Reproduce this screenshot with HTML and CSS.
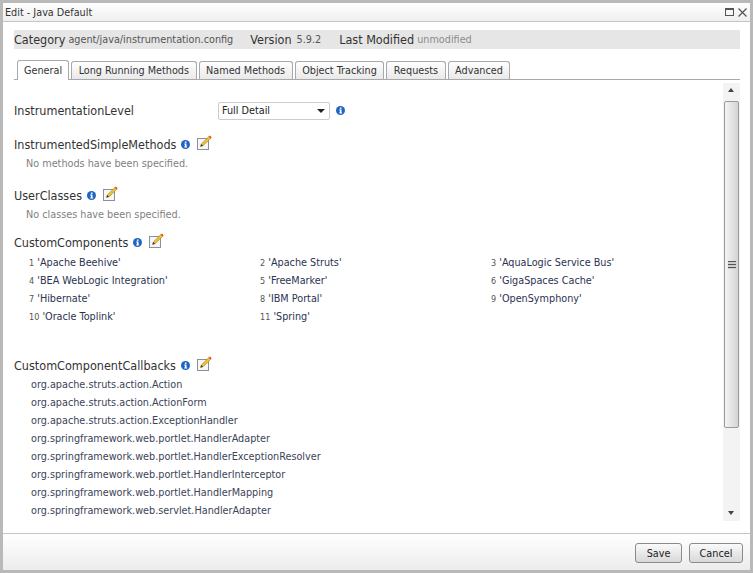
FILE: index.html
```html
<!DOCTYPE html>
<html lang="en">
<head>
<meta charset="utf-8">
<title>Edit - Java Default</title>
<link rel="stylesheet" href="styles.css">
</head>
<body>
<svg class="defs" width="0" height="0" aria-hidden="true">
  <symbol id="info" viewBox="0 0 9 9">
    <circle cx="4.5" cy="4.5" r="4.5" fill="#1f66c4"/>
    <rect x="3.9" y="1.5" width="1.6" height="1.4" fill="#fff"/>
    <path d="M3.2 3.6H5.5V6.4H6.1V7.4H3.2V6.4H3.9V4.5H3.2Z" fill="#fff"/>
  </symbol>
  <symbol id="edit" viewBox="0 0 15 15">
    <rect x="0.5" y="3.5" width="11" height="11" fill="#f4f6fa" stroke="#8a8f99"/>
    <path d="M3.5 11.5L4.3 9L11.8 1.6L13.6 3.4L6 10.8Z" fill="#f2c230" stroke="#a8781c" stroke-width=".6"/>
    <path d="M11.8 1.6L12.9 .5L14.7 2.3L13.6 3.4Z" fill="#e0502c"/>
    <path d="M3.5 11.5L4.3 9L6 10.8Z" fill="#333"/>
  </symbol>
</svg>
<div class="window">
  <header class="titlebar">
    <span class="title">Edit - Java Default</span>
    <span class="winbtns">
      <svg width="9" height="8" viewBox="0 0 9 8"><rect x=".5" y=".5" width="8" height="7" fill="none" stroke="#555"/><rect x="0" y="0" width="9" height="2" fill="#555"/></svg>
      <svg width="9" height="9" viewBox="0 0 9 9"><path d="M.5.5L8.5 8.5M8.5.5L.5 8.5" stroke="#555" stroke-width="1.2"/></svg>
    </span>
  </header>
  <main class="body">
    <div class="infobar">
      <span class="lbl">Category</span> <span class="val">agent/java/instrumentation.config</span>
      <span class="lbl gap">Version</span> <span class="val val-version">5.9.2</span>
      <span class="lbl gap gap-last">Last Modified</span> <span class="val muted">unmodified</span>
    </div>
    <nav class="tabs">
      <span class="tab active">General</span>
      <span class="tab">Long Running Methods</span>
      <span class="tab">Named Methods</span>
      <span class="tab">Object Tracking</span>
      <span class="tab">Requests</span>
      <span class="tab">Advanced</span>
    </nav>
    <div class="pane">
      <div class="content">
        <div class="level">
          <span class="head level-label">InstrumentationLevel</span>
          <span class="select"><span>Full Detail</span><i class="caret"></i></span>
          <svg class="info"><use href="#info"/></svg>
        </div>
        <div class="head-row r1"><span class="head">InstrumentedSimpleMethods</span><svg class="info"><use href="#info"/></svg><svg class="edit"><use href="#edit"/></svg></div>
        <div class="empty">No methods have been specified.</div>
        <div class="head-row r2"><span class="head">UserClasses</span><svg class="info"><use href="#info"/></svg><svg class="edit"><use href="#edit"/></svg></div>
        <div class="empty">No classes have been specified.</div>
        <div class="head-row r3"><span class="head">CustomComponents</span><svg class="info"><use href="#info"/></svg><svg class="edit"><use href="#edit"/></svg></div>
        <ol class="grid">
          <li><small>1</small> 'Apache Beehive'</li>
          <li><small>2</small> 'Apache Struts'</li>
          <li><small>3</small> 'AquaLogic Service Bus'</li>
          <li><small>4</small> 'BEA WebLogic Integration'</li>
          <li><small>5</small> 'FreeMarker'</li>
          <li><small>6</small> 'GigaSpaces Cache'</li>
          <li><small>7</small> 'Hibernate'</li>
          <li><small>8</small> 'IBM Portal'</li>
          <li><small>9</small> 'OpenSymphony'</li>
          <li><small>10</small> 'Oracle Toplink'</li>
          <li><small>11</small> 'Spring'</li>
        </ol>
        <div class="head-row r4"><span class="head">CustomComponentCallbacks</span><svg class="info"><use href="#info"/></svg><svg class="edit"><use href="#edit"/></svg></div>
        <ul class="list">
          <li>org.apache.struts.action.Action</li>
          <li>org.apache.struts.action.ActionForm</li>
          <li>org.apache.struts.action.ExceptionHandler</li>
          <li>org.springframework.web.portlet.HandlerAdapter</li>
          <li>org.springframework.web.portlet.HandlerExceptionResolver</li>
          <li>org.springframework.web.portlet.HandlerInterceptor</li>
          <li>org.springframework.web.portlet.HandlerMapping</li>
          <li>org.springframework.web.servlet.HandlerAdapter</li>
        </ul>
      </div>
      <div class="scrollbar">
        <i class="arrow up"></i>
        <div class="thumb"><span class="grip"></span></div>
        <i class="arrow down"></i>
      </div>
    </div>
  </main>
  <footer class="footer">
    <button class="btn save">Save</button>
    <button class="btn cancel">Cancel</button>
  </footer>
</div>
</body>
</html>
```
FILE: styles.css
```css
* { box-sizing: border-box; }
html, body { margin: 0; height: 100%; }
body { font-family: "DejaVu Sans Condensed", "DejaVu Sans", sans-serif; color: #2b2b2b; font-size: 10.75px; overflow: hidden; }
.defs { position: absolute; }
.window { width: 753px; height: 573px; border: 3px solid #b9b9b9; display: flex; flex-direction: column; background: #fff; }
.titlebar { height: 19px; flex: none; display: flex; align-items: center; justify-content: space-between; padding: 0 3px 0 2px; border-bottom: 1px solid #c4c4c4; background: linear-gradient(#fff, #efefef); font-size: 10.75px; color: #333; }
.winbtns { display: flex; gap: 4px; align-items: center; }
.body { flex: 1; min-height: 0; padding: 8px 10px 0 11px; display: flex; flex-direction: column; }
.infobar { height: 19px; flex: none; background: #e6e6e6; display: flex; align-items: center; white-space: pre; color: #555; }
.lbl { font-size: 12.5px; color: #333; }
.val { margin-left: 3px; }
.val-version { margin-left: 5px; }
.gap { margin-left: 17px; }
.gap-last { margin-left: 18px; }
.muted { color: #8c8c8c; }
.tabs { height: 20px; margin-top: 11px; flex: none; display: flex; gap: 2px; padding-left: 3px; border-bottom: 1px solid #a9a9a9; align-items: flex-end; }
.tab { height: 18px; padding: 0 6.5px; border: 1px solid #a9a9a9; border-bottom: 0; border-radius: 3px 3px 0 0; background: linear-gradient(#fff, #e9e9e9); display: flex; align-items: center; color: #333; }
.tab.active { height: 20px; margin-bottom: -1px; background: #fff; padding: 0 6px; }
.pane { flex: 1; min-height: 0; display: flex; padding-top: 3px; padding-bottom: 12px; }
.content { flex: 1; min-width: 0; overflow: hidden; }
.head { font-size: 12.5px; color: #333; }
.level { display: flex; align-items: center; height: 19px; margin-top: 18px; }
.level-label { width: 204px; }
.select { width: 112px; height: 18px; border: 1px solid #ccc; border-radius: 2px; display: flex; align-items: center; justify-content: space-between; padding: 0 4px 0 3px; color: #222; }
.caret { border: 4px solid transparent; border-top: 4px solid #222; border-bottom: 0; }
.info { width: 9px; height: 9px; flex: none; margin-left: 5px; }
.edit { width: 15px; height: 15px; flex: none; margin-left: 7px; margin-top: -3px; }
.level .info { margin-left: 6px; }
.head-row { display: flex; align-items: center; height: 18px; }
.r1 { margin-top: 15px; }
.r2 { margin-top: 14px; }
.r3 { margin-top: 10px; }
.r4 { margin-top: 30px; }
.empty { margin: 3px 0 0 12px; height: 16px; line-height: 16px; color: #7f7f7f; }
.grid { list-style: none; margin: 3px 0 0; padding: 0 0 0 15px; display: grid; grid-template-columns: 231px 231px 1fr; grid-auto-rows: 18px; line-height: 18px; color: #2c3350; }
.grid small { font-size: 9px; color: #555; }
.list { list-style: none; margin: 2px 0 0; padding: 0 0 0 17px; line-height: 18px; color: #3c4458; }
.scrollbar { width: 17px; flex: none; background: #f3f3f3; display: flex; flex-direction: column; align-items: stretch; position: relative; }
.arrow { display: block; flex: none; height: 18px; position: relative; }
.arrow::after { content: ""; position: absolute; left: 5px; border: 3.5px solid transparent; }
.arrow.up::after { top: 5px; border-bottom: 4px solid #444; border-top: 0; }
.arrow.down::after { top: 8px; border-top: 4px solid #444; border-bottom: 0; }
.thumb { flex: 1; margin: 0 1px 75px; border: 1px solid #9a9a9a; border-radius: 2px; background: linear-gradient(90deg, #f4f4f4, #d4d4d4); display: flex; align-items: center; justify-content: center; }
.grip { width: 8px; height: 8px; background: repeating-linear-gradient(#555 0 1px, #ccc 1px 3px); }
.footer { height: 37px; flex: none; border-top: 1px solid #c4c4c4; background: linear-gradient(#fff, #ececec); display: flex; justify-content: flex-end; align-items: center; gap: 7px; padding: 2px 7px 0 0; }
.btn { height: 20px; font: inherit; color: #222; background: linear-gradient(#fafafa, #d8d8d8); border: 1px solid #8a8a8a; border-radius: 3px; padding: 0; }
.save { width: 47px; }
.cancel { width: 54px; }
```
